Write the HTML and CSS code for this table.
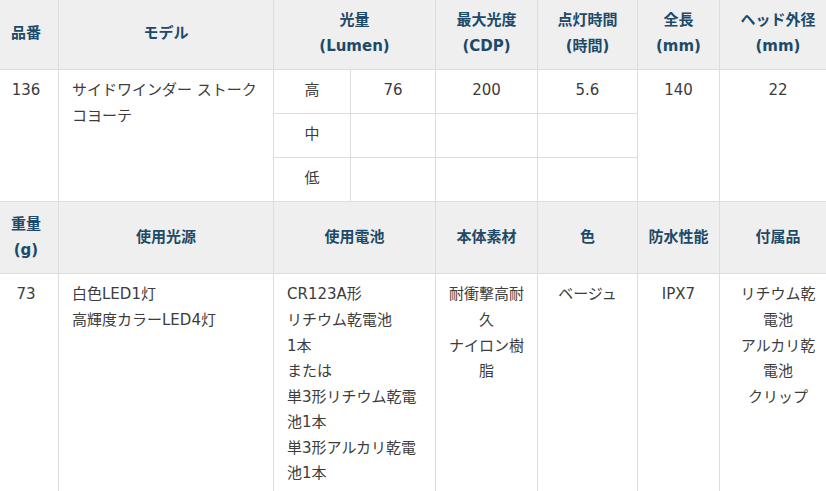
FILE: index.html
```html
<!DOCTYPE html>
<html lang="ja">
<head>
<meta charset="utf-8">
<title>スペック</title>
<link rel="stylesheet" href="styles.css">
</head>
<body>
<table class="spec">
  <colgroup>
    <col class="c-no">
    <col class="c-model">
    <col class="c-lv">
    <col class="c-lm">
    <col class="c-cdp">
    <col class="c-time">
    <col class="c-len">
    <col class="c-head">
  </colgroup>
  <tr class="hd">
    <th>品番</th>
    <th>モデル</th>
    <th colspan="2">光量<br>(Lumen)</th>
    <th>最大光度<br>(CDP)</th>
    <th>点灯時間<br>(時間)</th>
    <th>全長<br>(mm)</th>
    <th>ヘッド外径<br>(mm)</th>
  </tr>
  <tr class="sub">
    <td rowspan="3">136</td>
    <td rowspan="3" class="left">サイドワインダー ストーク コヨーテ</td>
    <td>高</td>
    <td>76</td>
    <td>200</td>
    <td>5.6</td>
    <td rowspan="3">140</td>
    <td rowspan="3">22</td>
  </tr>
  <tr class="sub">
    <td>中</td>
    <td></td>
    <td></td>
    <td></td>
  </tr>
  <tr class="sub">
    <td>低</td>
    <td></td>
    <td></td>
    <td></td>
  </tr>
  <tr class="hd">
    <th>重量<br>(g)</th>
    <th>使用光源</th>
    <th colspan="2">使用電池</th>
    <th>本体素材</th>
    <th>色</th>
    <th>防水性能</th>
    <th>付属品</th>
  </tr>
  <tr class="data">
    <td>73</td>
    <td class="left">白色LED1灯<br>高輝度カラーLED4灯</td>
    <td colspan="2" class="left">CR123A形<br>リチウム乾電池<br>1本<br>または<br>単3形リチウム乾電池1本<br>単3形アルカリ乾電池1本</td>
    <td>耐衝撃高耐久<br>ナイロン樹脂</td>
    <td>ベージュ</td>
    <td>IPX7</td>
    <td class="wide-pad">リチウム乾電池<br>アルカリ乾電池<br>クリップ</td>
  </tr>
</table>
</body>
</html>
```

FILE: styles.css
```css
html, body {
  margin: 0;
  padding: 0;
  background: #ffffff;
  overflow: hidden;
}

body {
  font-family: "DejaVu Sans", "Noto Sans CJK JP", sans-serif;
  font-size: 15px;
  color: #3c3c3c;
}

.spec {
  border-collapse: collapse;
  table-layout: fixed;
  width: 843px;
  margin: -3px 0 0 -7px;
}

.c-no { width: 65px; }
.c-model { width: 215px; }
.c-lv { width: 77px; }
.c-lm { width: 85px; }
.c-cdp { width: 102px; }
.c-time { width: 100px; }
.c-len { width: 82px; }
.c-head { width: 117px; }

.spec th,
.spec td {
  border: 1px solid #dddddd;
  line-height: 25.6px;
  text-align: center;
}

.spec th {
  background: #efefef;
  color: #1d4a68;
  font-weight: bold;
  padding: 10px 4px;
  vertical-align: middle;
}

.spec td {
  padding: 8px 12px 9.4px;
  vertical-align: top;
}

.spec td.left {
  text-align: left;
  padding-left: 13px;
  padding-right: 13px;
}

.spec td.wide-pad {
  padding-left: 16px;
  padding-right: 16px;
}
```
